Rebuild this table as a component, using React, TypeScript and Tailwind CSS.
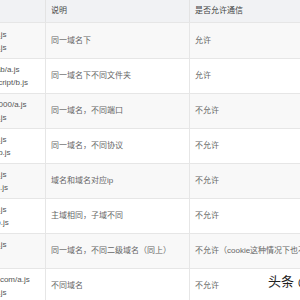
import React from "react";

const rows: { urls: [string, string]; desc: string; allow: string }[] = [
  { urls: ["http://www.a.com/a.js", "http://www.a.com/b.js"], desc: "同一域名下", allow: "允许" },
  { urls: ["http://www.a.com/lab/a.js", "http://www.a.com/script/b.js"], desc: "同一域名下不同文件夹", allow: "允许" },
  { urls: ["http://www.a.com:8000/a.js", "http://www.a.com/b.js"], desc: "同一域名，不同端口", allow: "不允许" },
  { urls: ["http://www.a.com/a.js", "https://www.a.com/b.js"], desc: "同一域名，不同协议", allow: "不允许" },
  { urls: ["http://www.a.com/a.js", "http://70.32.92.74/b.js"], desc: "域名和域名对应ip", allow: "不允许" },
  { urls: ["http://www.a.com/a.js", "http://script.a.com/b.js"], desc: "主域相同，子域不同", allow: "不允许" },
  { urls: ["http://www.a.com/a.js", "http://a.com/b.js"], desc: "同一域名，不同二级域名（同上）", allow: "不允许（cookie这种情况下也不允许访问）" },
  { urls: ["http://www.cnblogs.com/a.js", "http://www.a.com/b.js"], desc: "不同域名", allow: "不允许" },
];

export default function App() {
  return (
    <div
      className="relative w-[300px] h-[300px] overflow-hidden bg-white text-[8px] text-[#555]"
      style={{ fontFamily: '"Liberation Sans", "Noto Sans CJK SC", sans-serif' }}
    >
      <div className="ml-[-78px] w-[600px]">
        <div className="flex h-[22px] bg-[#f1f2f4] items-center text-[#444]">
          <div className="w-[124px] h-full border-r border-[#e3e3e3] pl-[8px] flex items-center">URL</div>
          <div className="w-[144px] h-full border-r border-[#e3e3e3] pl-[5px] flex items-center">说明</div>
          <div className="flex-1 h-full pl-[5px] flex items-center">是否允许通信</div>
        </div>
        {rows.map((r, i) => (
          <div
            key={i}
            className={`flex border-t border-[#e6e6e6] ${i === 0 ? "h-[36px]" : "h-[35px]"} ${i % 2 === 0 ? "bg-[#f8f8f8]" : "bg-white"}`}
          >
            <div className="w-[124px] h-full border-r border-[#e6e6e6] pl-[9px] flex flex-col justify-center leading-[13px] whitespace-nowrap">
              <div>{r.urls[0]}</div>
              <div>{r.urls[1]}</div>
            </div>
            <div className="w-[144px] h-full border-r border-[#e6e6e6] pl-[5px] flex items-center whitespace-nowrap text-[#666]">
              {r.desc}
            </div>
            <div className="flex-1 h-full pl-[5px] flex items-center whitespace-nowrap text-[#666]">{r.allow}</div>
          </div>
        ))}
      </div>
      <div className="absolute left-[268px] top-[272px] text-[13px] text-[#222] whitespace-nowrap">头条 @前端</div>
    </div>
  );
}
